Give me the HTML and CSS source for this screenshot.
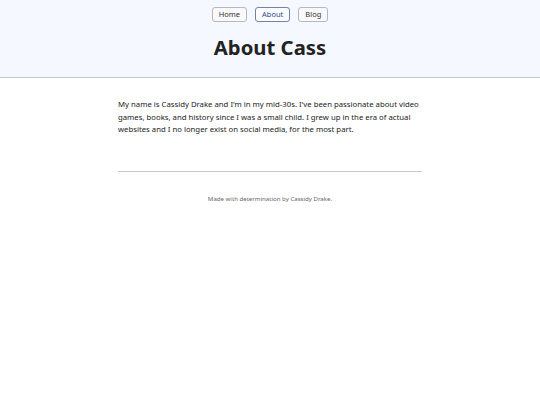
FILE: index.html
```
<!DOCTYPE html>
<html>
<head>
<meta charset="utf-8">
<link rel="stylesheet" href="styles.css">
</head>
<body>
<header class="site-header">
  <nav class="nav">
    <a class="nav-btn" href="#">Home</a>
    <a class="nav-btn active" href="#">About</a>
    <a class="nav-btn" href="#">Blog</a>
  </nav>
  <h1 class="title">About Cass</h1>
</header>
<main class="content">
  <p class="bio">My name is Cassidy Drake and I'm in my mid-30s. I've been passionate about video games, books, and history since I was a small child. I grew up in the era of actual websites and I no longer exist on social media, for the most part.</p>
  <hr class="rule">
  <footer class="footer">Made with determination by Cassidy Drake.</footer>
</main>
</body>
</html>
```
FILE: styles.css
```
* { box-sizing: border-box; }
html, body { margin: 0; padding: 0; background: #fff; }
body { font-family: "Noto Sans", sans-serif; color: #222; }
.site-header {
  background: #f5f8fe;
  border-bottom: 1px solid #c4c8d0;
  height: 78px;
  padding-top: 7px;
}
.nav {
  display: flex;
  justify-content: center;
  gap: 8px;
}
.nav-btn {
  display: block;
  font-size: 7.5px;
  line-height: 13px;
  padding: 0 6px;
  border: 1px solid #b4b8c2;
  border-radius: 3px;
  background: #f9f9fb;
  color: #333;
  text-decoration: none;
}
.nav-btn.active { color: #2f4a85; border-color: #7484a8; background: #fbfcff; }
.title {
  margin: 12px 0 0;
  text-align: center;
  font-size: 20.3px;
  line-height: 26px;
  font-weight: 700;
  color: #222;
}
.content {
  width: 304px;
  margin: 0 auto;
  padding-top: 20px;
}
.bio {
  margin: 0;
  font-size: 7.75px;
  line-height: 12.5px;
  color: #222;
}
.rule {
  margin: 35px 0 0;
  border: 0;
  border-top: 1px solid #c8c8c8;
}
.footer {
  margin-top: 22px;
  text-align: center;
  font-size: 6.1px;
  color: #666;
}
```
